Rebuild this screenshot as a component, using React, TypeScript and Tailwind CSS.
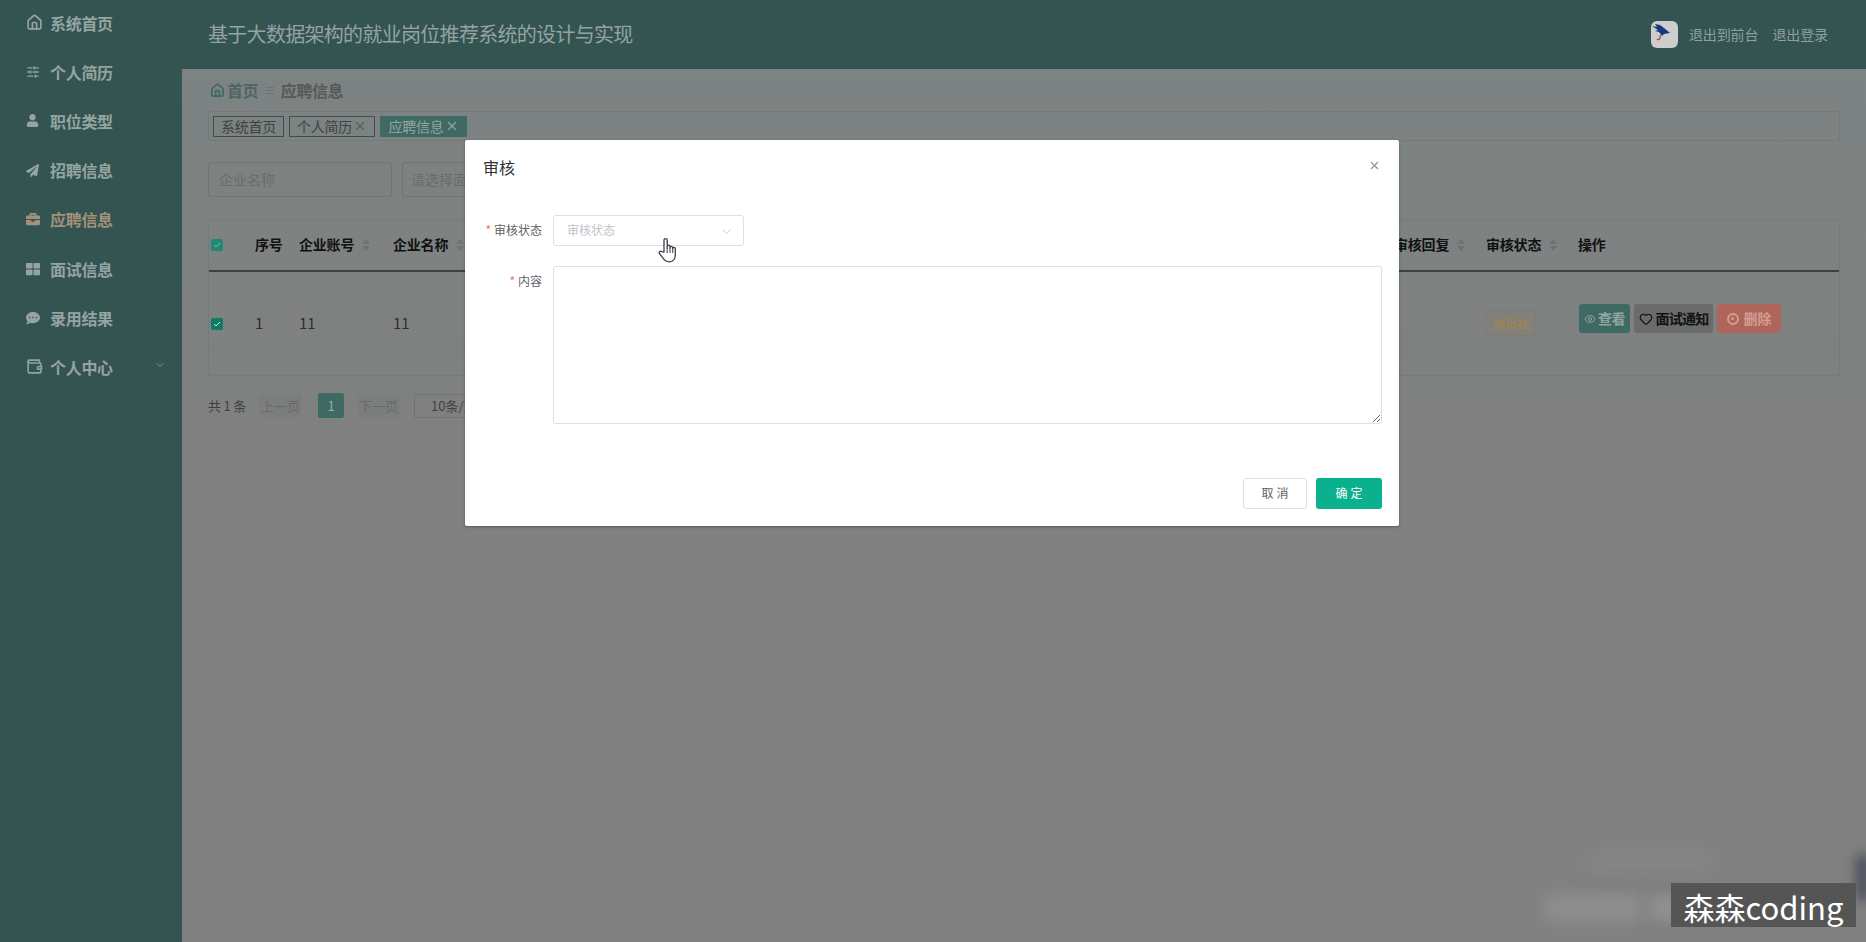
import React from 'react';
import { ChevronDown, Eye, Heart, Home, SlidersHorizontal, Wallet, X } from 'lucide-react';
import { FaBriefcase, FaCommentDots, FaPaperPlane, FaThLarge, FaUser } from 'react-icons/fa';

const fontFamily = "font-['Noto_Sans_CJK_SC','Liberation_Sans',sans-serif]";

const menuItems = [
  { label: '系统首页', icon: <Home size={17} strokeWidth={2.4} /> },
  { label: '个人简历', icon: <SlidersHorizontal size={14} strokeWidth={2.4} /> },
  { label: '职位类型', icon: <FaUser size={13} /> },
  { label: '招聘信息', icon: <FaPaperPlane size={13} /> },
  { label: '应聘信息', icon: <FaBriefcase size={14} />, active: true },
  { label: '面试信息', icon: <FaThLarge size={14} /> },
  { label: '录用结果', icon: <FaCommentDots size={14} /> },
  { label: '个人中心', icon: <Wallet size={17} strokeWidth={2.2} />, arrow: true },
];

const Sort = () => (
  <span className="ml-2 flex flex-col gap-[2px]">
    <span className="size-0 border-x-[4px] border-b-[5px] border-x-transparent border-b-[#6f7271]" />
    <span className="size-0 border-x-[4px] border-t-[5px] border-x-transparent border-t-[#6f7271]" />
  </span>
);

const Sidebar = () => (
  <aside className="w-[182px] shrink-0 bg-[#335451]">
    <ul className="-mt-[2px] flex flex-col">
      {menuItems.map((item) => (
        <li
          key={item.label}
          className={`flex h-[49.2px] items-center pl-[25px] text-[16px] font-bold tracking-[-0.3px] ${
            item.active ? 'text-[#a3917a]' : 'text-[#93a4a1]'
          }`}
        >
          <span className="flex w-[25px] justify-start pl-px">{item.icon}</span>
          <span>{item.label}</span>
          {item.arrow && <ChevronDown size={12} className="ml-[41px] -mt-1 text-[#7c9290]" />}
        </li>
      ))}
    </ul>
  </aside>
);

const Header = () => (
  <header className="flex h-[69px] items-center bg-[#335451] pl-[26px] pr-[38px]">
    <h1 className="flex-1 pb-[2px] text-[20px] tracking-[-0.7px] text-[#93a4a1]">
      基于大数据架构的就业岗位推荐系统的设计与实现
    </h1>
    <div className="flex size-[27px] items-center justify-center rounded-[6px] bg-[#cdcdcd]">
      <svg viewBox="0 0 27 27" className="size-[27px]">
        <path d="M1 5l5 1-2-3 5 1 4 3 6 5-6 1-2 2-3-4-4-1 3-1z" fill="#17397c" />
        <path d="M9 14c1 3-1 6-3 4" fill="none" stroke="#a34b3d" strokeWidth="1.3" />
      </svg>
    </div>
    <span className="ml-[11px] text-[14px] tracking-[-0.1px] text-[#8ea19e]">退出到前台</span>
    <span className="ml-[14px] text-[14px] tracking-[-0.1px] text-[#8ea19e]">退出登录</span>
  </header>
);

const Toolbar = () => (
  <>
    <div className="flex h-[42px] items-center pl-[2px] text-[16px] font-bold tracking-[-0.4px]">
      <Home size={15} strokeWidth={2.8} className="mr-[2px] text-[#3f6b66]" />
      <span className="text-[#4d6663]">首页</span>
      <span className="mx-[6px] text-[11px] text-[#6e7170]">≡</span>
      <span className="text-[#555a58]">应聘信息</span>
    </div>
    <div className="flex h-[30px] items-center gap-[5px] rounded-[2px] border border-[#767978] pl-[4px] text-[14px] tracking-[-0.2px]">
      <span className="flex h-[21px] w-[71px] items-center justify-center border border-[#3b4f4c] text-[#3f4140]">
        系统首页
      </span>
      <span className="flex h-[21px] w-[86px] items-center justify-center gap-[1px] border border-[#3b4f4c] text-[#3f4140]">
        个人简历 <X size={14} className="text-[#5c5e5d]" />
      </span>
      <span className="flex h-[21px] w-[87px] items-center justify-center gap-[1px] bg-[#3f6a64] text-[#93a4a1]">
        应聘信息 <X size={14} />
      </span>
    </div>
    <div className="mt-[21px] flex gap-[10px] text-[14px] text-[#6a6c6b]">
      <div className="flex h-[35px] w-[184px] items-center rounded-[3px] border border-[#717473] pl-[10px]">企业名称</div>
      <div className="flex h-[35px] w-[183px] items-center rounded-[3px] border border-[#717473] pl-[8px]">请选择面</div>
    </div>
  </>
);

const JobTable = () => (
  <div className="mt-[23px] rounded-[2px] border border-[#777a79] text-[#111]">
    <div className="flex h-[51px] items-center border-b-2 border-[#3f4140] pb-[2px] text-[14px] font-bold tracking-[-0.2px]">
      <span className="flex w-[46px] pl-[2px]"><Checkbox dim /></span>
      <span className="w-[44px]">序号</span>
      <span className="flex w-[94px] items-center">企业账号<Sort /></span>
      <span className="flex items-center">企业名称<Sort /></span>
      <span className="flex-1" />
      <span className="flex w-[92px] items-center">审核回复<Sort /></span>
      <span className="flex w-[92px] items-center">审核状态<Sort /></span>
      <span className="w-[261px]">操作</span>
    </div>
    <div className="flex h-[103px] items-center text-[15px] text-[#2e2f2e]">
      <span className="flex w-[46px] pl-[2px]"><Checkbox /></span>
      <span className="w-[44px]">1</span>
      <span className="w-[94px]">11</span>
      <span>11</span>
      <span className="flex-1" />
      <span className="w-[92px]" />
      <span className="w-[92px]">
        <span className="flex h-[25px] w-[50px] items-center justify-center rounded-[2px] border border-[#7f7c75] bg-[#82807a] text-[12px] text-[#a58549]">
          待审核
        </span>
      </span>
      <div className="mb-[10px] flex w-[261px] gap-[4px] pl-px text-[14px] font-bold">
        <button className="flex h-[29px] w-[51px] items-center justify-center gap-[2px] rounded-[3px] bg-[#3f6a64] tracking-[-0.5px] text-[#93a4a1]">
          <Eye size={12} />查看
        </button>
        <button className="flex h-[29px] w-[79px] items-center justify-center gap-[3px] rounded-[3px] bg-[#6a6b6c] tracking-[-0.8px] text-[#111]">
          <Heart size={14} />面试通知
        </button>
        <button className="flex h-[29px] w-[64px] items-center justify-center gap-[5px] rounded-[3px] bg-[#b0655a] text-[#d39c94]">
          <span className="flex size-[12px] items-center justify-center rounded-full border-2 border-[#d39c94]">
            <span className="size-[3px] rounded-full bg-[#d39c94]" />
          </span>
          删除
        </button>
      </div>
    </div>
  </div>
);

const Checkbox = ({ dim }: { dim?: boolean }) => (
  <span className={`flex size-[12px] items-center justify-center rounded-[2px] ${dim ? 'bg-[#1f8a74]' : 'bg-[#107a64]'}`}>
    <svg viewBox="0 0 12 12" className="size-[12px]">
      <path d="M3 6l2 2 4-4" fill="none" stroke={dim ? '#8fb5ab' : '#cfe3dd'} strokeWidth="1" />
    </svg>
  </span>
);

const Pagination = () => (
  <div className="mt-[17px] flex h-[25px] items-center whitespace-nowrap text-[13px] text-[#3f4140]">
    <span className="w-[50px] tracking-[-0.2px]">共 1 条</span>
    <span className="ml-[1px] flex h-[24px] w-[43px] items-center justify-center rounded-[2px] bg-[#7c7e7d] text-[#686a69]">上一页</span>
    <span className="ml-[16px] flex h-[25px] w-[26px] items-center justify-center rounded-[2px] bg-[#3f6a64] text-[#9aada9]">1</span>
    <span className="ml-[13px] flex h-[24px] w-[43px] items-center justify-center rounded-[2px] bg-[#7c7e7d] text-[#686a69]">下一页</span>
    <span className="ml-[14px] flex h-[24px] w-[70px] items-center rounded-[2px] border border-[#717473] pl-[16px]">10条/页</span>
  </div>
);

const HandCursor = () => (
  <svg viewBox="0 0 20 26" className="absolute left-[658px] top-[237px] h-[26px] w-[20px]">
    <path
      d="M6 15V3.2a1.6 1.6 0 0 1 3.2 0V11v-1.4a1.4 1.4 0 0 1 2.8 0V11v-.6a1.4 1.4 0 0 1 2.7 0v1.2a1.3 1.3 0 0 1 2.6 0V18c0 4-2.2 6.8-6 6.8-3.4 0-5-1.4-6.5-4L1.4 16.4a1.5 1.5 0 0 1 2.3-1.8z"
      fill="#fff"
      stroke="#3a3d44"
      strokeWidth="1.3"
      strokeLinejoin="round"
    />
    <path d="M9.2 11v5M12 11v5M14.7 11.5v4.5" stroke="#3a3d44" strokeWidth="1" />
  </svg>
);

const ReviewDialog = () => (
  <div className="mt-[140px] h-[386px] w-[934px] -translate-x-px rounded-[2px] bg-white shadow-[0_1px_3px_rgba(0,0,0,0.3)]">
    <div className="flex h-[57px] items-center justify-between px-[18px]">
      <h2 className="pb-[3px] text-[16px] text-[#303133]">审核</h2>
      <X size={13} className="mb-[6px] text-[#909399]" />
    </div>
    <div className="flex flex-col pr-[17px] pt-[18px]">
      <div className="flex items-center">
        <label className="w-[80px] pb-[1px] pr-[3px] text-right text-[12px] leading-none text-[#606266]">
          <span className="mr-[3px] text-[#f56c6c]">*</span>审核状态
        </label>
        <div className="ml-[8px] flex h-[31px] w-[191px] items-center justify-between rounded-[3px] border border-[#dcdfe6] pb-[1px] pl-[13px] pr-[9px] text-[12px] text-[#c0c4cc]">
          审核状态
          <ChevronDown size={15} strokeWidth={1.3} className="mt-[2px]" />
        </div>
      </div>
      <div className="mt-[20px] flex items-start">
        <label className="w-[80px] pr-[3px] pt-[9px] text-right text-[12px] leading-none text-[#606266]">
          <span className="mr-[3px] text-[#f56c6c]">*</span>内容
        </label>
        <textarea className="ml-[8px] h-[158px] flex-1 rounded-[3px] border border-[#dcdfe6] outline-none" />
      </div>
    </div>
    <div className="mt-[54px] flex justify-end gap-[9px] pr-[17px] text-[12px]">
      <button className="h-[31px] w-[64px] rounded-[3px] border border-[#dcdfe6] pb-[1px] pl-[3px] tracking-[3px] text-[#606266]">取消</button>
      <button className="h-[31px] w-[66px] rounded-[3px] bg-[#0bb08f] pb-[1px] pl-[3px] tracking-[3px] text-white">确定</button>
    </div>
  </div>
);

const App = () => (
  <div className={`relative flex h-[942px] w-[1866px] overflow-hidden bg-[#808080] ${fontFamily}`}>
    <Sidebar />
    <div className="flex min-w-0 flex-1 flex-col">
      <Header />
      <main className="flex-1 bg-gradient-to-b from-[#7c8382] to-[#808080] to-[45%] px-[26px]">
        <Toolbar />
        <JobTable />
        <Pagination />
      </main>
    </div>

    {/* blurred leftovers in the corner of the recording */}
    <div className="absolute left-[1545px] top-[895px] h-[26px] w-[95px] bg-[#8f8f8f] blur-[8px]" />
    <div className="absolute left-[1650px] top-[895px] h-[26px] w-[30px] bg-[#8f8f8f] blur-[6px]" />
    <div className="absolute left-[1585px] top-[850px] h-[22px] w-[130px] bg-[#858585] blur-[8px]" />
    <div className="absolute left-[1856px] top-[855px] h-[45px] w-[14px] bg-[#4b4f5c] blur-[6px]" />

    {/* dialog layer */}
    <div className="absolute inset-0 flex justify-center">
      <ReviewDialog />
    </div>
    <HandCursor />

    <div className="absolute left-[1671px] top-[883px] flex h-[44px] w-[185px] items-center justify-center bg-[#555555] pt-[3px] text-[31px] leading-none text-white">
      森森coding
    </div>
  </div>
);

export default App;
